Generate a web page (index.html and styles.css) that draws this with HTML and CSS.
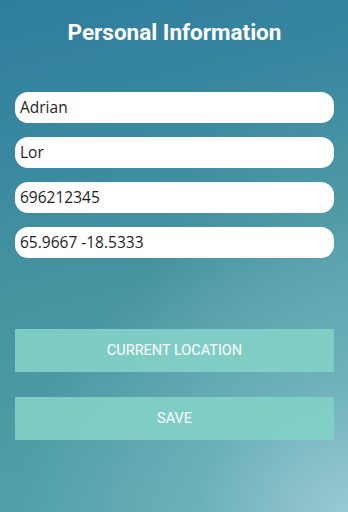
FILE: index.html
```html
<!DOCTYPE html>
<html>
<head>
<meta charset="utf-8">
<link rel="stylesheet" href="styles.css">
</head>
<body>
<div class="screen">
  <h1 class="title">Personal Information</h1>
  <div class="fields">
    <div class="field">Adrian</div>
    <div class="field">Lor</div>
    <div class="field">696212345</div>
    <div class="field">65.9667 -18.5333</div>
  </div>
  <div class="buttons">
    <div class="btn">CURRENT LOCATION</div>
    <div class="btn">SAVE</div>
  </div>
</div>
</body>
</html>
```
FILE: styles.css
```css
html, body {
  margin: 0;
  padding: 0;
}
.screen {
  width: 348px;
  height: 512px;
  overflow: hidden;
  box-sizing: border-box;
  padding: 21px 14px 0 15px;
  background:
    radial-gradient(ellipse 330px 300px at 100% 100%, rgba(160, 206, 216, 0.9) 0%, rgba(140, 195, 205, 0.45) 45%, rgba(120, 180, 190, 0) 100%),
    radial-gradient(ellipse 200px 220px at 100% 55%, rgba(110, 175, 185, 0.35), rgba(110, 175, 185, 0) 100%),
    linear-gradient(165deg, #2e7c9e 0%, #3988a0 25%, #4693a0 50%, #4c9ca4 72%, #55a5ac 100%);
  font-family: Roboto, "Noto Sans", sans-serif;
}
.title {
  margin: 0;
  font-family: Roboto, sans-serif;
  font-weight: 700;
  font-size: 22.5px;
  line-height: 23px;
  color: #ffffff;
  text-align: center;
}
.fields {
  margin-top: 48px;
  display: flex;
  flex-direction: column;
  gap: 14px;
}
.field {
  height: 31px;
  line-height: 31px;
  box-sizing: border-box;
  padding-left: 5px;
  background: #ffffff;
  border-radius: 13px;
  font-family: "Open Sans", sans-serif;
  font-size: 15.5px;
  color: #1e1e1e;
}
.buttons {
  margin-top: 71px;
  display: flex;
  flex-direction: column;
  gap: 25px;
}
.btn {
  height: 43px;
  line-height: 43px;
  text-align: center;
  background: rgba(130, 208, 198, 0.92);
  color: #ffffff;
  font-family: Roboto, sans-serif;
  font-size: 14.5px;
}
```
